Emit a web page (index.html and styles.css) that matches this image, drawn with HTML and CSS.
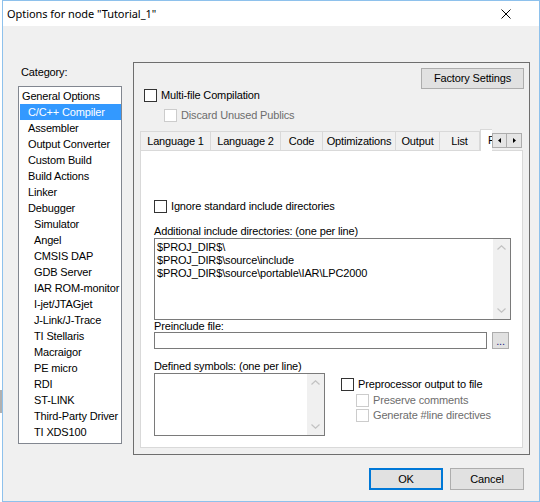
FILE: index.html
```html
<!DOCTYPE html>
<html>
<head>
<meta charset="utf-8">
<title>Options for node</title>
<link rel="stylesheet" href="styles.css">
</head>
<body>
<div class="desk">
  <div class="strip"><div class="strip-gray"></div></div>
  <div class="win">
    <div class="titlebar">
      <span class="title">Options for node "Tutorial_1"</span>
      <svg class="close" width="10" height="10" viewBox="0 0 10 10"><path d="M0.5 0.5 L9.5 9.5 M9.5 0.5 L0.5 9.5" stroke="#000" stroke-width="1" fill="none"/></svg>
    </div>
    <div class="client">
      <div class="main">
        <div class="leftcol">
          <div class="cat-label">Category:</div>
          <div class="listbox">
            <div class="li l0">General Options</div>
            <div class="li l1 sel">C/C++ Compiler</div>
            <div class="li l1">Assembler</div>
            <div class="li l1">Output Converter</div>
            <div class="li l1">Custom Build</div>
            <div class="li l1">Build Actions</div>
            <div class="li l1">Linker</div>
            <div class="li l1">Debugger</div>
            <div class="li l2">Simulator</div>
            <div class="li l2">Angel</div>
            <div class="li l2">CMSIS DAP</div>
            <div class="li l2">GDB Server</div>
            <div class="li l2">IAR ROM-monitor</div>
            <div class="li l2">I-jet/JTAGjet</div>
            <div class="li l2">J-Link/J-Trace</div>
            <div class="li l2">TI Stellaris</div>
            <div class="li l2">Macraigor</div>
            <div class="li l2">PE micro</div>
            <div class="li l2">RDI</div>
            <div class="li l2">ST-LINK</div>
            <div class="li l2">Third-Party Driver</div>
            <div class="li l2">TI XDS100</div>
          </div>
        </div>
        <div class="panel">
          <div class="fs-row"><div class="btn fs">Factory Settings</div></div>
          <div class="chk-row multi"><span class="cb"></span><span>Multi-file Compilation</span></div>
          <div class="chk-row discard dis"><span class="cb"></span><span>Discard Unused Publics</span></div>
          <div class="tabs">
            <div class="tab t-l1">Language 1</div>
            <div class="tab t-l2">Language 2</div>
            <div class="tab t-code">Code</div>
            <div class="tab t-opt">Optimizations</div>
            <div class="tab t-out">Output</div>
            <div class="tab t-list">List</div>
            <div class="tab tab-sel"><span class="sel-glyph">P</span></div>
            <div class="spin">
              <div class="spin-btn"><svg width="3" height="5" viewBox="0 0 3 5"><path d="M3 0 L0 2.5 L3 5 Z" fill="#000"/></svg></div>
              <div class="spin-btn"><svg width="3" height="5" viewBox="0 0 3 5"><path d="M0 0 L3 2.5 L0 5 Z" fill="#000"/></svg></div>
            </div>
          </div>
          <div class="page">
            <div class="chk-row ignore"><span class="cb"></span><span>Ignore standard include directories</span></div>
            <div class="lbl lbl-add">Additional include directories: (one per line)</div>
            <div class="edit edit-add">
              <div class="edit-text">$PROJ_DIR$\<br>$PROJ_DIR$\source\include<br>$PROJ_DIR$\source\portable\IAR\LPC2000</div>
              <div class="vscroll">
                <div class="sbtn"><svg width="9" height="5" viewBox="0 0 9 5"><path d="M0.5 4.5 L4.5 0.8 L8.5 4.5" stroke="#c2c2c2" stroke-width="1.2" fill="none"/></svg></div>
                <div class="sbtn"><svg width="9" height="5" viewBox="0 0 9 5"><path d="M0.5 0.5 L4.5 4.2 L8.5 0.5" stroke="#c2c2c2" stroke-width="1.2" fill="none"/></svg></div>
              </div>
            </div>
            <div class="lbl lbl-pre">Preinclude file:</div>
            <div class="pre-row">
              <div class="field"></div>
              <div class="btn dots">...</div>
            </div>
            <div class="lbl lbl-def">Defined symbols: (one per line)</div>
            <div class="def-row">
              <div class="edit edit-def">
                <div class="edit-text"></div>
                <div class="vscroll">
                  <div class="sbtn"><svg width="9" height="5" viewBox="0 0 9 5"><path d="M0.5 4.5 L4.5 0.8 L8.5 4.5" stroke="#c2c2c2" stroke-width="1.2" fill="none"/></svg></div>
                  <div class="sbtn"><svg width="9" height="5" viewBox="0 0 9 5"><path d="M0.5 0.5 L4.5 4.2 L8.5 0.5" stroke="#c2c2c2" stroke-width="1.2" fill="none"/></svg></div>
                </div>
              </div>
              <div class="pp-col">
                <div class="chk-row pp"><span class="cb"></span><span>Preprocessor output to file</span></div>
                <div class="chk-row sub dis"><span class="cb"></span><span>Preserve comments</span></div>
                <div class="chk-row sub dis"><span class="cb"></span><span>Generate #line directives</span></div>
              </div>
            </div>
          </div>
        </div>
      </div>
      <div class="footer">
        <div class="btn ok">OK</div>
        <div class="btn cancel">Cancel</div>
      </div>
    </div>
  </div>
</div>
</body>
</html>
```
FILE: styles.css
```css
* { box-sizing: border-box; }
html, body { margin: 0; padding: 0; background: #fff; }
body {
  font-family: "Liberation Sans", Arial, sans-serif;
  font-size: 11px;
  letter-spacing: -0.15px;
  color: #000;
  width: 540px;
  height: 502px;
  overflow: hidden;
}
.desk { display: flex; width: 540px; height: 502px; }
.strip { width: 2px; flex: none; padding-top: 390px; }
.strip-gray { height: 23px; background: #b0b0b0; }
.win {
  width: 538px;
  height: 502px;
  flex: none;
  border: 1px solid #8ec1ec;
  display: flex;
  flex-direction: column;
  background: #f0f0f0;
}
.titlebar {
  height: 25px;
  flex: none;
  background: #fff;
  display: flex;
  align-items: center;
  justify-content: space-between;
  padding: 0 28px 0 4px;
}
.title {
  font-family: "Noto Sans", "Liberation Sans", sans-serif;
  font-size: 11px;
  letter-spacing: -0.05px;
  line-height: 16px;
}
.close { display: block; }

.client { flex: 1; display: flex; flex-direction: column; padding: 36px 0 0 15px; }
.main { display: flex; gap: 11px; align-items: flex-start; }

.leftcol { width: 104px; padding-top: 4px; }
.cat-label { line-height: 13px; padding-left: 3px; margin-bottom: 7px; }
.listbox {
  width: 104px;
  height: 358px;
  border: 1px solid #828790;
  background: #fff;
  padding-top: 1px;
}
.li { height: 16px; line-height: 16px; margin-left: 1px; white-space: nowrap; }
.l0 { padding-left: 2px; }
.l1 { padding-left: 8px; }
.l2 { padding-left: 14px; }
.sel { background: #3399ff; color: #fff; }

.panel {
  width: 397px;
  height: 393px;
  border: 1px solid #6e6e6e;
}
.fs-row { display: flex; justify-content: flex-end; padding-right: 5px; margin-top: 5px; }
.btn {
  background: #e1e1e1;
  border: 1px solid #adadad;
  display: flex;
  align-items: center;
  justify-content: center;
  line-height: 13px;
}
.fs { width: 103px; height: 21px; }

.chk-row { display: flex; align-items: center; height: 13px; line-height: 13px; white-space: nowrap; }
.cb {
  width: 13px;
  height: 13px;
  flex: none;
  border: 1px solid #333;
  background: #fff;
  margin-right: 4px;
}
.dis { color: #6d6d6d; }
.dis .cb { border-color: #cccccc; background: #fff; }
.multi { margin-left: 10px; }
.discard { margin-left: 30px; margin-top: 7px; }

.tabs {
  display: flex;
  align-items: flex-end;
  height: 21px;
  margin: 7px 0 0 6px;
  position: relative;
  z-index: 1;
}
.tab {
  height: 19px;
  line-height: 18px;
  border: 1px solid #d9d9d9;
  border-right: none;
  border-bottom: none;
  background: #f0f0f0;
  text-align: center;
  white-space: nowrap;
}
.t-l1 { width: 70px; }
.t-l2 { width: 70px; }
.t-code { width: 42px; }
.t-opt { width: 73px; }
.t-out { width: 44px; }
.t-list { width: 41px; border-right: 1px solid #d9d9d9; }
.tab-sel {
  width: 12px;
  height: 22px;
  margin-bottom: -1px;
  background: #fff;
  border-right: none;
  text-align: left;
  padding-left: 7px;
  line-height: 20px;
}
.sel-glyph { display: inline-block; width: 4px; overflow: visible; }
.spin { display: flex; align-self: flex-start; margin-top: 4px; background: #fff; }
.spin-btn {
  width: 15px;
  height: 15px;
  background: #e5e5e5;
  border: 1px solid #adadad;
  display: flex;
  align-items: center;
  justify-content: center;
}
.spin-btn + .spin-btn { border-left: none; width: 15px; }

.page {
  width: 383px;
  height: 298px;
  margin-left: 6px;
  border: 1px solid #d9d9d9;
  background: #fff;
  padding-left: 13px;
}
.ignore { margin-top: 49px; }
.lbl { line-height: 13px; white-space: nowrap; }
.lbl-add { margin-top: 12px; }
.edit {
  border: 1px solid #7a7a7a;
  background: #fff;
  display: flex;
}
.edit-add { width: 357px; height: 82px; }
.edit-text { flex: 1; padding: 2px 0 0 2px; line-height: 13px; white-space: nowrap; }
.vscroll {
  width: 17px;
  flex: none;
  background: #f0f0f0;
  display: flex;
  flex-direction: column;
  justify-content: space-between;
}
.sbtn { height: 17px; display: flex; align-items: center; justify-content: center; }
.lbl-pre { margin-top: 0; line-height: 12px; }
.pre-row { display: flex; gap: 5px; margin-top: 0; }
.field { width: 333px; height: 17px; border: 1px solid #7a7a7a; background: #fff; }
.dots { width: 17px; height: 17px; align-items: flex-end; line-height: 10px; padding-bottom: 2px; color: #202080; }
.lbl-def { margin-top: 11px; line-height: 12px; }
.def-row { display: flex; margin-top: 1px; }
.edit-def { width: 171px; height: 63px; }
.pp-col { margin-left: 16px; padding-top: 5px; }
.pp { margin-bottom: 3px; }
.sub { margin-left: 15px; margin-bottom: 2px; }

.footer { display: flex; justify-content: flex-end; gap: 7px; padding-right: 15px; margin-top: 13px; }
.ok { width: 74px; height: 22px; border: 2px solid #0078d7; }
.cancel { width: 74px; height: 22px; }
```
